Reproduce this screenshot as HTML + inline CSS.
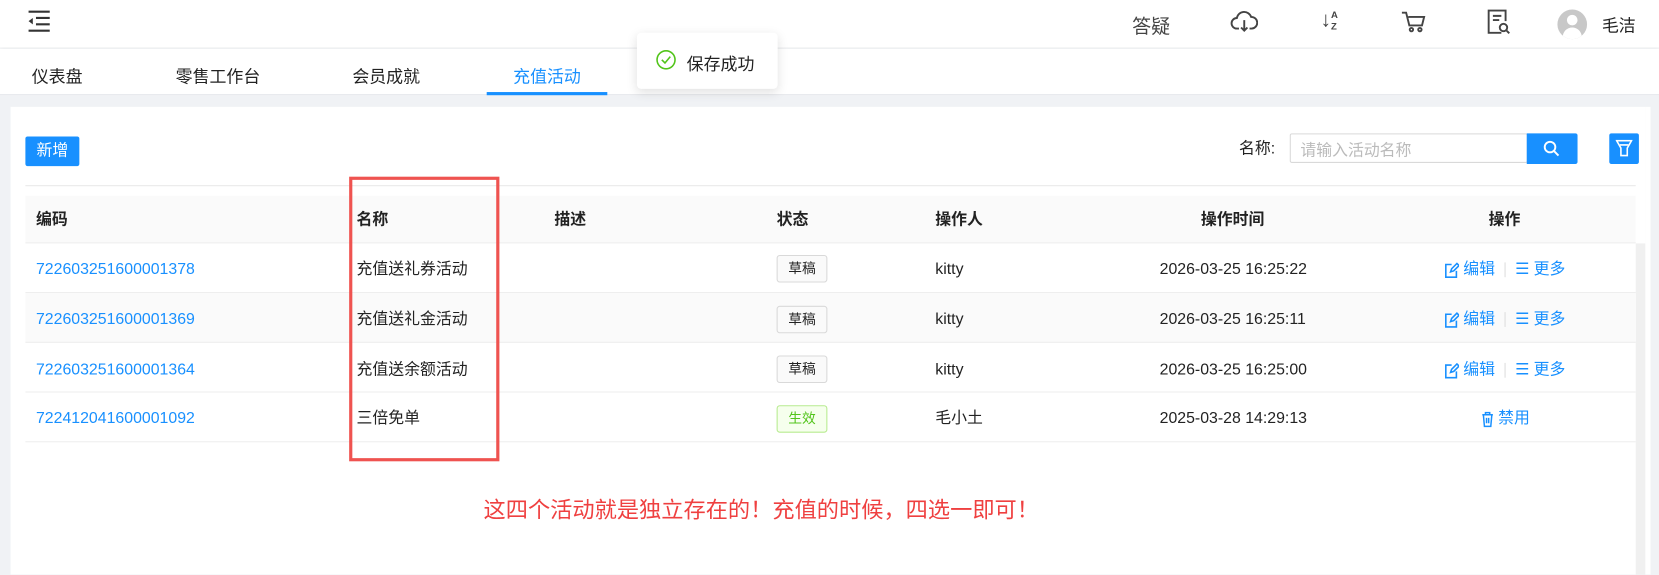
<!DOCTYPE html>
<html><head><meta charset="utf-8"><style>
*{margin:0;padding:0;box-sizing:border-box}
body{width:1659px;height:543px;overflow:hidden;background:#f0f2f5;font-family:"Liberation Sans","Noto Sans CJK SC",sans-serif;color:#222;position:relative}
#root{position:absolute;left:0;top:0;width:1568px;height:514px;transform:scale(1.05804);transform-origin:0 0}
.abs{position:absolute}
.hdr{left:0;top:0;width:1568px;height:45px;background:#fff;box-shadow:0 1px 4px rgba(0,0,0,.08)}
.tabs{left:0;top:46px;width:1568px;height:44px;background:#fff;border-bottom:1px solid #e4e6ea}
.tab{top:13px;font-size:16px;color:#222}
.card{left:10px;top:101px;width:1545px;height:442px;background:#fff}
.th{top:185px;height:45px;left:24px;width:1522px;background:#fafafa;border-bottom:1px solid #eee}
.row{left:24px;width:1522px;height:47px;border-bottom:1px solid #eee}
.t{font-size:15px;line-height:20px}
.b{font-weight:bold}
.link{color:#1890ff}
.tag{width:48px;height:26px;border:1px solid #d9d9d9;background:#fafafa;border-radius:3px;font-size:13px;text-align:center;line-height:24px;color:#222}
.ops{display:flex;align-items:center;gap:4px}
</style></head><body><div id="root">
<div class="abs hdr"></div>
<svg class="abs" style="left:25px;top:9px" width="24" height="22" viewBox="0 0 24 22"><g stroke="#333" stroke-width="2"><line x1="2" y1="2" x2="22" y2="2"/><line x1="9" y1="8" x2="22" y2="8"/><line x1="9" y1="14" x2="22" y2="14"/><line x1="2" y1="20" x2="22" y2="20"/></g><path d="M6 8 L2 11 L6 14Z" fill="#333"/></svg>
<div class="abs" style="left:1070px;top:11px;font-size:18px;color:#444">答疑</div>
<svg class="abs" style="left:1163px;top:9px" width="26" height="24" viewBox="0 0 26 24" fill="none" stroke="#444" stroke-width="1.8"><path d="M8 18H6a5 5 0 0 1 0-10 7 7 0 0 1 13.5-1A5 5 0 0 1 20 18h-2"/><path d="M13 10v10M10 17l3 3 3-3"/></svg>
<div class="abs" style="left:1248px;top:8px;font-size:20px;color:#444">↓</div>
<div class="abs" style="left:1258px;top:9px;font-size:9px;font-weight:bold;color:#444;line-height:11px">A<br>Z</div>
<svg class="abs" style="left:1324px;top:10px" width="24" height="22" viewBox="0 0 24 22" fill="none" stroke="#444" stroke-width="1.8"><path d="M1 2h4l3 12h12l2-8H7"/><circle cx="10" cy="18" r="1.6"/><circle cx="18" cy="18" r="1.6"/></svg>
<svg class="abs" style="left:1405px;top:8px" width="24" height="26" viewBox="0 0 24 26" fill="none" stroke="#444" stroke-width="1.8"><path d="M14 23H2V2h16v10"/><path d="M6 7h8M6 11h6"/><circle cx="16" cy="18" r="3.5"/><path d="M19 21l2.5 2.5"/></svg>
<div class="abs" style="left:1472px;top:9px;width:28px;height:28px;border-radius:50%;background:#c8c8c8;overflow:hidden"><div class="abs" style="left:9px;top:5px;width:10px;height:10px;border-radius:50%;background:#fff"></div><div class="abs" style="left:5px;top:17px;width:18px;height:14px;border-radius:9px 9px 0 0;background:#fff"></div></div>
<div class="abs" style="left:1514px;top:11px;font-size:16px">毛洁</div>
<div class="abs tabs"></div>
<div class="abs tab" style="left:30px;top:59px">仪表盘</div>
<div class="abs tab" style="left:166px;top:59px">零售工作台</div>
<div class="abs tab" style="left:333px;top:59px">会员成就</div>
<div class="abs tab" style="left:485px;top:59px;color:#1890ff">充值活动</div>
<div class="abs" style="left:460px;top:87px;width:114px;height:3px;background:#1890ff"></div>
<div class="abs card"></div>
<div class="abs" style="left:1555px;top:101px;width:5px;height:442px;background:#fff"></div>
<div class="abs" style="left:1546px;top:230px;width:9px;height:313px;background:#f0f0f0"></div>
<div class="abs" style="left:24px;top:129px;width:51px;height:28px;background:#1890ff;border-radius:2px;color:#fff;font-size:15px;text-align:center;line-height:28px">新增</div>
<div class="abs" style="left:24px;top:175px;width:1522px;height:1px;background:#e8e8e8"></div>
<div class="abs t" style="left:1171px;top:131px">名称:</div>
<div class="abs" style="left:1219px;top:126px;width:225px;height:28px;border:1px solid #d9d9d9;border-radius:2px;font-size:15px;color:#bbb;padding:4px 9px">请输入活动名称</div>
<div class="abs" style="left:1443px;top:126px;width:48px;height:29px;background:#1890ff;border-radius:0 2px 2px 0"></div>
<svg class="abs" style="left:1458px;top:132px" width="17" height="17" viewBox="0 0 17 17" fill="none" stroke="#fff" stroke-width="1.8"><circle cx="7" cy="7" r="5"/><path d="M11 11l4 4"/></svg>
<div class="abs" style="left:1521px;top:126px;width:28px;height:29px;background:#1890ff;border-radius:2px"></div>
<svg class="abs" style="left:1527px;top:132px" width="16" height="17" viewBox="0 0 16 17" fill="none" stroke="#fff" stroke-width="1.5"><path d="M1 1h14l-4 7v7H5V8Z"/><path d="M4 5h8"/></svg>
<div class="abs th"></div>
<div class="abs t b" style="left:34px;top:198px">编码</div>
<div class="abs t b" style="left:337px;top:198px">名称</div>
<div class="abs t b" style="left:524px;top:198px">描述</div>
<div class="abs t b" style="left:734px;top:198px">状态</div>
<div class="abs t b" style="left:884px;top:198px">操作人</div>
<div class="abs t b" style="left:1135px;top:198px">操作时间</div>
<div class="abs t b" style="left:1407px;top:198px">操作</div>
<div class="abs row" style="top:230px"></div>
<div class="abs row" style="top:277px;background:#fafafa"></div>
<div class="abs row" style="top:324px"></div>
<div class="abs row" style="top:371px"></div>
<div class="abs t link" style="left:34px;top:245px">722603251600001378</div>
<div class="abs t link" style="left:34px;top:292px">722603251600001369</div>
<div class="abs t link" style="left:34px;top:340px">722603251600001364</div>
<div class="abs t link" style="left:34px;top:386px">722412041600001092</div>
<div class="abs t" style="left:337px;top:245px">充值送礼券活动</div>
<div class="abs t" style="left:337px;top:292px">充值送礼金活动</div>
<div class="abs t" style="left:337px;top:340px">充值送余额活动</div>
<div class="abs t" style="left:337px;top:386px">三倍免单</div>
<div class="abs tag" style="left:734px;top:241px">草稿</div>
<div class="abs tag" style="left:734px;top:289px">草稿</div>
<div class="abs tag" style="left:734px;top:336px">草稿</div>
<div class="abs tag" style="left:734px;top:383px;background:#f6ffed;border-color:#b7eb8f;color:#52c41a">生效</div>
<div class="abs t" style="left:884px;top:245px">kitty</div>
<div class="abs t" style="left:884px;top:292px">kitty</div>
<div class="abs t" style="left:884px;top:340px">kitty</div>
<div class="abs t" style="left:884px;top:386px">毛小土</div>
<div class="abs t" style="left:1096px;top:245px">2026-03-25 16:25:22</div>
<div class="abs t" style="left:1096px;top:292px">2026-03-25 16:25:11</div>
<div class="abs t" style="left:1096px;top:340px">2026-03-25 16:25:00</div>
<div class="abs t" style="left:1096px;top:386px">2025-03-28 14:29:13</div>
<div class="abs t link ops" style="left:1365px;top:245px"><svg width="14" height="15" viewBox="0 0 14 15" fill="none" stroke="#1890ff" stroke-width="1.5"><path d="M7 2H1.5v12h10V8"/><path d="M6 9l1-3 5-5 2 2-5 5z"/></svg>编辑<span style="display:inline-block;width:1px;height:14px;background:#ddd;margin:0 5px"></span><span>☰</span> 更多</div>
<div class="abs t link ops" style="left:1365px;top:292px"><svg width="14" height="15" viewBox="0 0 14 15" fill="none" stroke="#1890ff" stroke-width="1.5"><path d="M7 2H1.5v12h10V8"/><path d="M6 9l1-3 5-5 2 2-5 5z"/></svg>编辑<span style="display:inline-block;width:1px;height:14px;background:#ddd;margin:0 5px"></span><span>☰</span> 更多</div>
<div class="abs t link ops" style="left:1365px;top:340px"><svg width="14" height="15" viewBox="0 0 14 15" fill="none" stroke="#1890ff" stroke-width="1.5"><path d="M7 2H1.5v12h10V8"/><path d="M6 9l1-3 5-5 2 2-5 5z"/></svg>编辑<span style="display:inline-block;width:1px;height:14px;background:#ddd;margin:0 5px"></span><span>☰</span> 更多</div>
<div class="abs t link ops" style="left:1400px;top:386px"><svg width="12" height="15" viewBox="0 0 12 15" fill="none" stroke="#1890ff" stroke-width="1.4"><path d="M1 3h10M4 3V1h4v2M2 3l1 11h6l1-11M5 6v5M7 6v5"/></svg> 禁用</div>
<div class="abs" style="left:330px;top:167px;width:142px;height:269px;border:3px solid #ef5350"></div>
<div class="abs" style="left:457px;top:466px;font-size:21px;color:#ef4040">这四个活动就是独立存在的！充值的时候，四选一即可！</div>
<div class="abs" style="left:602px;top:31px;width:133px;height:53px;background:#fff;border-radius:4px;box-shadow:0 3px 10px rgba(0,0,0,.12)"></div>
<svg class="abs" style="left:620px;top:47px" width="19" height="19" viewBox="0 0 19 19" fill="none" stroke="#52c41a" stroke-width="1.5"><circle cx="9.5" cy="9.5" r="8.5"/><path d="M5.5 9.5l3 3 5-6"/></svg>
<div class="abs" style="left:649px;top:47px;font-size:16px">保存成功</div>
</div></body></html>
